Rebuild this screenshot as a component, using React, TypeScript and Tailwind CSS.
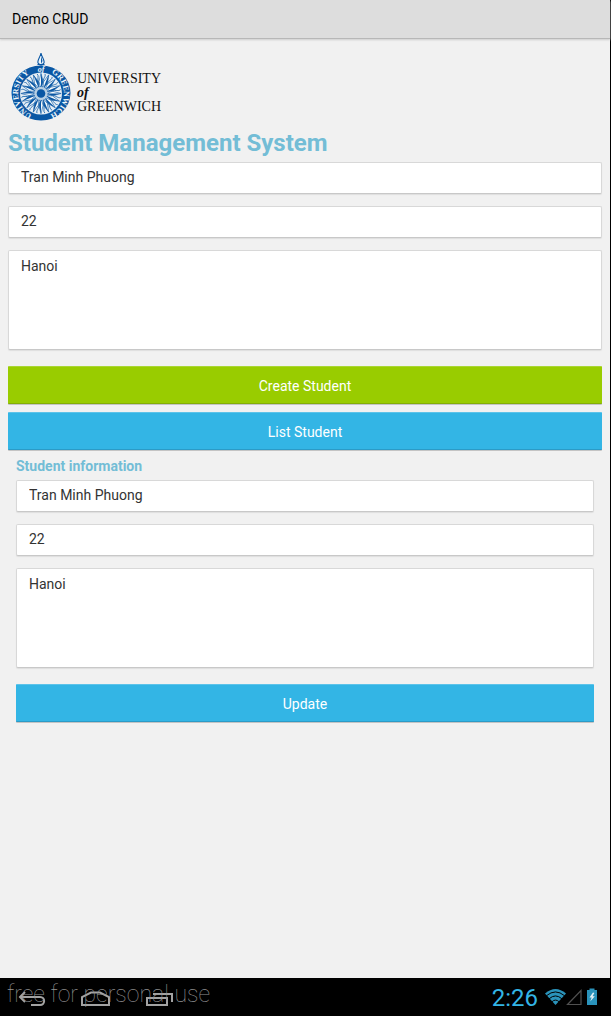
import React from "react";

const rays = Array.from({ length: 16 }, (_, i) => i * 22.5);

function Seal() {
  return (
    <svg viewBox="0 0 60 68" className="h-[68px] w-[60px] shrink-0" aria-hidden="true">
      <defs>
        <path id="seal-ring" d="M30 63.4 A22.9 22.9 0 0 1 30 17.6 A22.9 22.9 0 0 1 30 63.4" />
      </defs>
      <ellipse cx="30" cy="40" rx="29.5" ry="27.5" fill="#0a57a4" />
      <circle cx="30" cy="40.5" r="21" fill="#e6eef5" />
      {rays.map((a) => (
        <g key={a} transform={`rotate(${a} 30 40.5)`}>
          <path d="M30 20.3 L32.2 29 L30 35 L27.8 29 Z" fill="#f6fafc" stroke="#0a57a4" strokeWidth="0.6" />
          <path d="M30 20.3 L32.2 29 L30 35 Z" fill="#0a57a4" />
        </g>
      ))}
      {rays.map((a) => (
        <path
          key={a}
          transform={`rotate(${a + 11.25} 30 40.5)`}
          d="M30 20.5 C32 23 28.5 25 30 30"
          fill="none"
          stroke="#2b6fb0"
          strokeWidth="0.9"
        />
      ))}
      <circle cx="30" cy="40.5" r="7" fill="#b7cfe3" stroke="#0a57a4" strokeWidth="0.8" strokeDasharray="1.4 1" />
      <circle cx="30" cy="40.5" r="4.3" fill="#0a57a4" />
      <g fill="#eef5fa" fontFamily="Liberation Serif, serif" fontWeight="700" fontSize="8" textAnchor="middle">
        <text>
          <textPath href="#seal-ring" startOffset="23.9%">UNIVERSITY</textPath>
        </text>
        <text>
          <textPath href="#seal-ring" startOffset="75.5%">GREENWICH</textPath>
        </text>
        <text x="30" y="19" fontStyle="italic">of</text>
      </g>
      <path d="M30 0 C30.5 4 34 7 33 10 L31 12 L29 12 L27 10 C26 7 29.5 4 30 0 Z" fill="#eef5fa" stroke="#0a57a4" strokeWidth="1.1" />
      <path d="M30 3 L31.5 8 L30 11 Z" fill="#0a57a4" />
      <path d="M26.5 11.5 H33.5" stroke="#0a57a4" strokeWidth="1" />
    </svg>
  );
}

const fieldClass =
  "block w-full rounded-xs border border-[#d8d8d8] border-b-[#c8c8c8] bg-white px-3 text-sm text-[#333333] shadow-[0_1px_1px_#dedede] outline-none";

function Fields({ prefix }: { prefix: string }) {
  return (
    <div className="flex flex-col gap-3">
      <input id={`${prefix}-name`} aria-label="Name" defaultValue="Tran Minh Phuong" className={`${fieldClass} h-8 pb-0.5`} />
      <input id={`${prefix}-age`} aria-label="Age" defaultValue="22" className={`${fieldClass} h-8 pb-0.5`} />
      <textarea
        id={`${prefix}-address`}
        aria-label="Address"
        defaultValue="Hanoi"
        className={`${fieldClass} h-[100px] resize-none py-[5px]`}
      />
    </div>
  );
}

const buttonBase =
  "block h-[38px] w-full rounded-[1px] border-t border-b pt-0.5 text-sm text-white shadow-[0_1px_0_#c4c4c4]";
const blue = "border-t-[#5cc3ea] border-b-[#2b9bc7] bg-[#33b5e5]";
const green = "border-t-[#a9d633] border-b-[#83ae04] bg-[#99cc00]";

export default function App() {
  return (
    <div className="flex min-h-screen flex-col bg-black font-[Roboto,sans-serif]">
      <div className="mr-px flex flex-1 flex-col bg-[#f1f1f1]">
        <header className="flex h-[39px] items-center border-b border-[#b7b7b7] bg-[#dddddd] px-3 pb-px text-sm text-black shadow-[0_1px_2px_#cccccc]">
          Demo CRUD
        </header>
        <main className="px-2 pt-3.5">
          <div className="flex items-center gap-1.5 px-[3px]">
            <Seal />
            <div className="pt-3 font-['Liberation_Serif',serif] text-sm leading-[14px] text-[#111111]">
              <div>UNIVERSITY</div>
              <div className="font-bold italic">of</div>
              <div>GREENWICH</div>
            </div>
          </div>
          <h1 className="mt-1.5 mb-[3px] text-2xl leading-8 font-bold text-[#73bdd6]">Student Management System</h1>
          <form onSubmit={(e) => e.preventDefault()}>
            <Fields prefix="new" />
            <div className="mt-4 flex flex-col gap-2">
              <button className={`${buttonBase} ${green}`}>Create Student</button>
              <button type="button" className={`${buttonBase} ${blue}`}>List Student</button>
            </div>
          </form>
          <section className="px-2">
            <h2 className="pt-1.5 pb-1 text-sm leading-5 font-bold text-[#73bdd6]">Student information</h2>
            <form onSubmit={(e) => e.preventDefault()}>
              <Fields prefix="edit" />
              <button className={`${buttonBase} ${blue} mt-4`}>Update</button>
            </form>
          </section>
        </main>
      </div>
      <footer className="relative flex h-[38px] items-center justify-between pr-3 pl-4">
        <nav className="flex items-center gap-8">
          <button aria-label="Back" className="h-5 w-8">
            <svg viewBox="0 0 32 20" className="h-5 w-8" fill="none" stroke="#a3a3a3" strokeWidth="2">
              <path d="M9 5 L4 10 L9 15 M4 10 H24 C29.5 10 29.5 18 24 18 H15" />
            </svg>
          </button>
          <button aria-label="Home" className="h-5 w-8">
            <svg viewBox="0 0 32 20" className="h-5 w-8" fill="none" stroke="#a3a3a3" strokeWidth="2">
              <path d="M2 18 V10 L11 5.5 H20 L29 10 V18 Z" />
            </svg>
          </button>
          <button aria-label="Recent apps" className="h-5 w-8">
            <svg viewBox="0 0 32 20" className="h-5 w-8" fill="none" stroke="#a3a3a3" strokeWidth="2">
              <path d="M3 11 H23 V18 H3 Z M9 7 H28 V15" />
            </svg>
          </button>
        </nav>
        <div className="pointer-events-none absolute top-px left-[7px] text-[23px] leading-8 font-thin text-[#949494]">
          free for personal use
        </div>
        <div className="flex items-center">
          <time className="mr-[7px] pt-0.5 text-2xl leading-8 text-[#33b5e5]">2:26</time>
          <svg viewBox="0 0 54 20" className="h-5 w-[54px]" aria-hidden="true">
            <path d="M0 6.5 Q10.5 -2.5 21 6.5 L10.5 18 Z" fill="#2a93bb" />
            <path d="M1.5 8.7 Q10.5 1.2 19.5 8.7 M4.2 11.7 Q10.5 6.2 16.8 11.7 M7 14.7 Q10.5 11.5 14 14.7" fill="none" stroke="#000" strokeWidth="1" />
            <path d="M22.5 17.5 L36 3.5 V17.5 Z" fill="none" stroke="#505050" strokeWidth="1.2" />
            <path d="M42 3 H44.5 V1.5 H49.5 V3 H52 V18 H42 Z" fill="#2a93bb" />
            <path d="M48 5.5 L44.5 10.5 H46.7 L45.2 14.5 L49.8 9.2 H47.5 L49.4 6 Z" fill="#e5f3f8" />
          </svg>
        </div>
      </footer>
    </div>
  );
}
